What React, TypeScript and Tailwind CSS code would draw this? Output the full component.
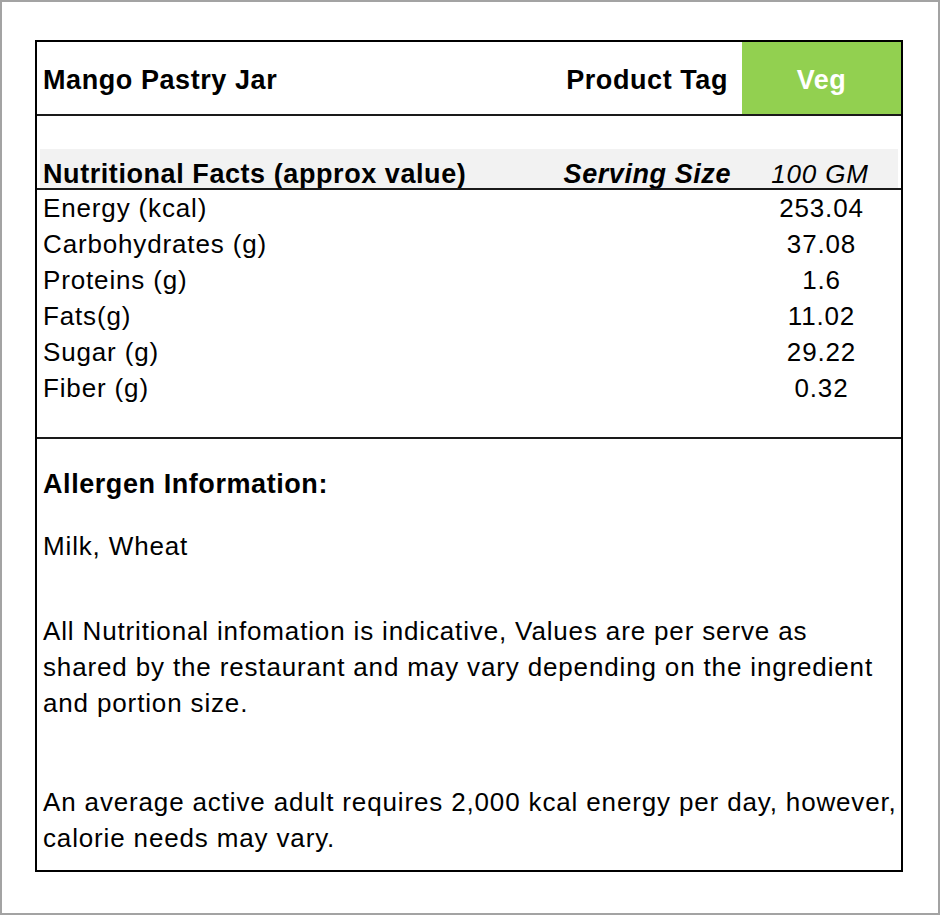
const NUTRIENTS = [
  { label: 'Energy (kcal)', value: '253.04' },
  { label: 'Carbohydrates (g)', value: '37.08' },
  { label: 'Proteins (g)', value: '1.6' },
  { label: 'Fats(g)', value: '11.02' },
  { label: 'Sugar (g)', value: '29.22' },
  { label: 'Fiber (g)', value: '0.32' },
]

const body = 'text-[26px] tracking-[0.85px] leading-[36px]'
const bold = 'text-[27px] font-bold tracking-[0.57px]'

export default function App() {
  return (
    <div className="h-[915px] w-[940px] border-2 border-[#a3a3a3] bg-white font-['Liberation_Sans',Arial,sans-serif] text-black">
      <div className="ml-[33px] mt-[38px] flex h-[832px] w-[868px] flex-col border-2 border-black">
        {/* header */}
        <div className="flex h-[74px] shrink-0 border-b-2 border-[#1a1a1a]">
          <div className={`flex flex-1 items-center pl-[6px] pt-[3px] leading-[32px] ${bold}`}>Mango Pastry Jar</div>
          <div className={`flex items-center pr-[14px] pt-[3px] leading-[32px] ${bold}`}>Product Tag</div>
          <div className={`flex w-[159px] items-center justify-center bg-[#92d050] pt-[3px] leading-[32px] text-white ${bold}`}>Veg</div>
        </div>

        <div className="h-[33px] shrink-0" />

        <div className="mx-[3px] flex h-[39px] shrink-0 items-end bg-[#f2f2f2]">
          <div className={`flex-1 pl-[3px] leading-[28px] ${bold}`}>Nutritional Facts (approx value)</div>
          <div className={`pr-[11px] leading-[28px] italic ${bold}`}>Serving Size</div>
          <div className="w-[156px] text-center text-[26px] leading-[28px] italic tracking-[0.85px]">100 GM</div>
        </div>
        <div className="h-[2px] shrink-0 bg-[#1a1a1a]" />

        <div className="flex h-[249px] shrink-0 flex-col border-b-2 border-[#1a1a1a]">
          {NUTRIENTS.map((n) => (
            <div key={n.label} className={`flex ${body} leading-[35.7px]`}>
              <span className="flex-1 pl-[6px]">{n.label}</span>
              <span className="w-[159px] text-center">{n.value}</span>
            </div>
          ))}
        </div>

        <div className="pl-[6px]">
          <p className={`mt-[27px] leading-[36px] ${bold}`}>Allergen Information:</p>
          <p className={`mt-[26px] ${body}`}>Milk, Wheat</p>
          <p className={`mt-[49px] ${body} leading-[35.6px]`}>
            All Nutritional infomation is indicative, Values are per serve as
            <br />
            shared by the restaurant and may vary depending on the ingredient
            <br />
            and portion size.
          </p>
          <p className={`mt-[63px] ${body}`}>
            An average active adult requires 2,000 kcal energy per day, however,
            <br />
            calorie needs may vary.
          </p>
        </div>
      </div>
    </div>
  )
}
